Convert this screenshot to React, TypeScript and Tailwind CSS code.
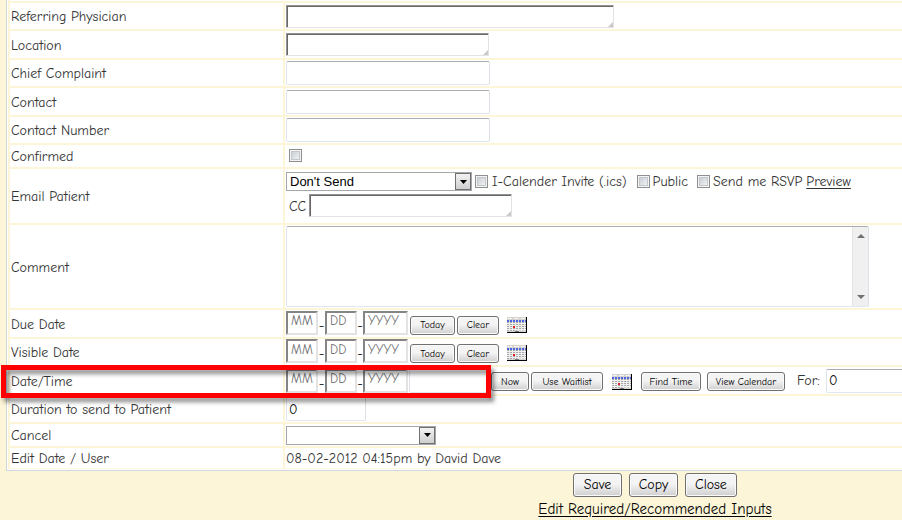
import type { ReactNode } from "react";

const hand = "font-['Comic_Sans_MS','Comic_Neue','Open_Sans',sans-serif]";
const arial = "font-['Liberation_Sans',Arial,sans-serif]";

function Row({ label, htmlFor, height, overlay, children }: {
  label: string; htmlFor?: string; height: string; overlay?: ReactNode; children: ReactNode;
}) {
  return (
    <div className={`relative grid grid-cols-[273px_minmax(0,1fr)] gap-0.5 ${height}`}>
      <div className="flex items-center bg-white px-px pt-0.5">
        {htmlFor ? <label htmlFor={htmlFor}>{label}</label> : <span>{label}</span>}
      </div>
      <div className="flex min-w-0 flex-col justify-center overflow-hidden bg-white pl-px">{children}</div>
      {overlay}
    </div>
  );
}

function InsetArea({ id, width, label }: { id: string; width: string; label?: string }) {
  return (
    <div className={`relative h-[23px] ${width}`}>
      <textarea id={id} aria-label={label} className="block h-full w-full resize-none overflow-hidden border border-t-[#949292] border-r-[#e3e3e3] border-b-[#e3e3e3] border-l-[#949292] bg-white px-1 shadow-[inset_1px_1px_0_#696767] outline-none" />
      <svg className="absolute right-px bottom-px" width="5" height="5" viewBox="0 0 5 5" aria-hidden="true"><path d="M5 0V5H0Z" fill="#c9c9c9" /></svg>
    </div>
  );
}

const softBorder = "rounded-xs border border-t-[#abadb3] border-r-[#dbdfe6] border-b-[#e2e6ee] border-l-[#dfe3ea] bg-white outline-none";

function TextBox({ id }: { id: string }) {
  return <input id={id} type="text" className={`h-6 w-[204px] px-1 ${softBorder}`} />;
}

function Check({ id, label }: { id: string; label?: string }) {
  return (
    <input id={id} aria-label={label} type="checkbox" className="size-[13px] shrink-0 appearance-none border border-[#8e8f8f] bg-linear-to-br from-[#bfc6cf] to-[#fbfbfb] shadow-[inset_0_0_0_1px_#f4f4f4,inset_0_0_0_2px_#c3c6cb]" />
  );
}

function Drop({ id, width, option, label }: { id: string; width: string; option: string; label?: string }) {
  return (
    <div className={`relative h-[19px] ${width}`}>
      <select id={id} aria-label={label} className={`block h-full w-full appearance-none border border-[#a5a7ad] bg-white px-[3px] text-[13px] leading-4 text-black outline-none ${arial}`}>
        <option>{option}</option>
      </select>
      <span className="pointer-events-none absolute inset-y-px right-px flex w-4 items-center justify-center border border-[#707070] bg-linear-to-b from-[#f2f2f2] to-[#cfcfcf]">
        <svg width="7" height="4" viewBox="0 0 7 4" aria-hidden="true"><path d="M0 0H7L3.500 4Z" fill="#000" /></svg>
      </span>
    </div>
  );
}

function Button({ width, children }: { width: string; children: ReactNode }) {
  return (
    <button type="button" className={`h-[19px] shrink-0 rounded-[3px] border border-[#707070] bg-linear-to-b from-[#f4f4f4] from-45% to-[#cfcfcf] text-[10px] leading-4 font-medium whitespace-nowrap text-black shadow-[inset_0_0_0_1px_#fafafa] ${width}`}>
      {children}
    </button>
  );
}

function FooterButton({ width, children }: { width: string; children: ReactNode }) {
  return (
    <button type="button" className={`h-6 rounded-[3px] border border-[#707070] bg-linear-to-b from-[#f4f4f4] from-45% to-[#cfcfcf] text-[14px] leading-5 text-black shadow-[inset_0_0_0_1px_#fafafa] ${width}`}>
      {children}
    </button>
  );
}

function CalendarButton() {
  return (
    <button type="button" aria-label="Open calendar" className="h-4 w-5 shrink-0">
      <svg className="block" width="20" height="16" viewBox="0 0 20 16" shapeRendering="crispEdges" aria-hidden="true">
        <rect width="20" height="16" fill="#d6d3ce" />
        <path d="M1 1h4v1H1zM7 1h5v1H7zM14 1h4v1h-4z" fill="#f4f4f4" />
        <path d="M0 5h19v1H0zM0 7h19v1H0zM0 9h19v1H0zM0 11h19v1H0zM0 13h10v1H0z" fill="#a8a8a8" />
        <path d="M0 6h19v1H0zM0 8h19v1H0zM0 10h19v1H0zM0 12h19v1H0z" fill="#f2f2f2" />
        <path d="M2 5h1v9H2zM5 5h1v9H5zM8 5h1v9H8zM11 5h1v9h-1zM14 5h1v9h-1zM17 5h1v9h-1z" fill="#eeeeee" />
        <path d="M0 3h2v2H0zM3 3h2v2H3zM6 3h2v2H6zM9 3h2v2H9zM12 3h2v2h-2zM15 3h2v2h-2zM18 3h1v2h-1z" fill="#4a66e4" />
        <rect x="6" y="9" width="2" height="2" fill="#e02020" />
        <path d="M19 0h1v16h-1zM0 15h20v1H0z" fill="#000" />
        <path d="M8 14h4v1H8z" fill="#777" />
      </svg>
    </button>
  );
}

function DatePart({ id, text, width, label }: { id: string; text: string; width: string; label: string }) {
  return (
    <input id={id} aria-label={label} type="text" placeholder={text} className={`h-6 shrink-0 border-2 border-t-[#858585] border-r-[#e3e3e3] border-b-[#e3e3e3] border-l-[#858585] bg-white px-[3px] pb-1 text-[13px] leading-4 outline-none placeholder:text-[#707070] ${width}`} />
  );
}

function DateParts({ id }: { id: string }) {
  return (
    <>
      <DatePart id={id} text="MM" width="w-8" label="Month" />
      <span className="w-[7px] text-center">-</span>
      <DatePart id={`${id}-day`} text="DD" width="w-8" label="Day" />
      <span className="w-[6px] text-center">-</span>
      <DatePart id={`${id}-year`} text="YYYY" width="w-[45px]" label="Year" />
    </>
  );
}

function DateRow({ id, label, height }: { id: string; label: string; height: string }) {
  return (
    <Row label={label} htmlFor={id} height={height}>
      <div className="flex items-end pb-0.5">
        <DateParts id={id} />
        <div className="ml-0.5 flex items-end gap-0.5">
          <Button width="w-[45px]">Today</Button>
          <Button width="w-[42px]">Clear</Button>
        </div>
        <div className="ml-2 flex pb-0.5"><CalendarButton /></div>
      </div>
    </Row>
  );
}

const highlight = (
  <div className="pointer-events-none absolute -top-0.5 -left-[9px] z-10 h-[33px] w-[490px] border-5 border-[#fe0000] drop-shadow-[3px_4px_2px_rgba(0,0,0,0.45)]" />
);

export default function App() {
  return (
    <main className={`min-h-screen overflow-hidden bg-[#fcf5d8] text-[14px] leading-[18px] text-[#333] ${hand}`}>
      <form className="ml-1.5 border-b border-l border-[#ccd6e2]">
        <div className="flex flex-col gap-0.5 border-b border-l border-white pb-px pl-0.5">
          <div className="h-px bg-white" />
          <Row label="Referring Physician" htmlFor="physician" height="min-h-[26px]"><InsetArea id="physician" width="w-[328px]" /></Row>
          <Row label="Location" htmlFor="location" height="min-h-[27px]"><InsetArea id="location" width="w-[203px]" /></Row>
          <Row label="Chief Complaint" htmlFor="complaint" height="min-h-[26px]"><TextBox id="complaint" /></Row>
          <Row label="Contact" htmlFor="contact" height="min-h-[27px]"><TextBox id="contact" /></Row>
          <Row label="Contact Number" htmlFor="number" height="min-h-[26px]"><TextBox id="number" /></Row>
          <Row label="Confirmed" htmlFor="confirmed" height="min-h-[22px]">
            <div className="flex pb-px pl-[3px]"><Check id="confirmed" /></div>
          </Row>
          <Row label="Email Patient" htmlFor="email" height="min-h-[54px]">
            <div className="flex flex-col gap-[3px] pb-[3px]">
              <div className="flex items-center whitespace-nowrap">
                <Drop id="email" width="w-[186px]" option="Don't Send" />
                <div className="ml-[3px] flex items-center gap-1"><Check id="ics" /><label htmlFor="ics">I-Calender Invite (.ics)</label></div>
                <div className="ml-2.5 flex items-center gap-[3px]"><Check id="public" /><label htmlFor="public">Public</label></div>
                <div className="ml-[9px] flex items-center gap-[3px]"><Check id="rsvp" /><label htmlFor="rsvp">Send me RSVP</label></div>
                <a href="#preview" className="ml-1 underline underline-offset-2">Preview</a>
              </div>
              <div className="flex items-center pl-[3px]">
                <label htmlFor="cc" className="w-5 pt-0.5">CC</label>
                <InsetArea id="cc" width="w-[203px]" />
              </div>
            </div>
          </Row>
          <Row label="Comment" htmlFor="comment" height="min-h-[83px]">
            <div className="relative h-[81px] w-[583px]">
              <textarea id="comment" className={`block h-full w-full resize-none py-1 pr-5 pl-1 ${softBorder}`} />
              <div className="absolute inset-y-px right-px flex w-4 flex-col items-center justify-between border-l border-[#e3e3e3] bg-[#f0f0f0] py-[7px]">
                <svg width="8" height="4" viewBox="0 0 8 4" aria-hidden="true"><path d="M0 4H8L4 0Z" fill="#707070" /></svg>
                <svg width="8" height="4" viewBox="0 0 8 4" aria-hidden="true"><path d="M0 0H8L4 4Z" fill="#707070" /></svg>
              </div>
            </div>
          </Row>
          <DateRow id="due" label="Due Date" height="min-h-[27px]" />
          <DateRow id="visible" label="Visible Date" height="min-h-[26px]" />
          <Row label="Date/Time" htmlFor="appointment" height="min-h-[27px]" overlay={highlight}>
            <div className="flex items-center">
              <div className="flex items-end"><DateParts id="appointment" /></div>
              <input type="text" aria-label="Time" className={`ml-px h-6 w-[82px] shrink-0 px-1 ${softBorder}`} />
              <div className="flex items-center gap-0.5 pt-0.5">
                <Button width="w-[38px]">Now</Button>
                <Button width="w-[72px]">Use Waitlist</Button>
              </div>
              <div className="mx-[9px] flex pt-0.5"><CalendarButton /></div>
              <div className="flex items-center gap-1.5 pt-0.5">
                <Button width="w-[60px]">Find Time</Button>
                <Button width="w-[78px]">View Calendar</Button>
              </div>
              <label htmlFor="for" className="ml-3 w-[29px] shrink-0">For:</label>
              <input id="for" type="text" defaultValue="0" className="h-6 min-w-10 flex-1 rounded-l-xs border border-r-0 border-t-[#abadb3] border-b-[#e2e6ee] border-l-[#dfe3ea] bg-white px-0.5 text-black outline-none" />
            </div>
          </Row>
          <Row label="Duration to send to Patient" htmlFor="duration" height="min-h-[26px]">
            <input id="duration" type="text" defaultValue="0" className={`h-6 w-20 px-0.5 text-black ${softBorder}`} />
          </Row>
          <Row label="Cancel" htmlFor="cancel" height="min-h-[22px]"><Drop id="cancel" width="w-[150px]" option="" /></Row>
          <Row label="Edit Date / User" height="min-h-[20px]"><span className="pt-0.5">08-02-2012 04:15pm by David Dave</span></Row>
        </div>
      </form>
      <footer className="flex flex-col items-center pt-0.5 pl-[408px]">
        <div className="flex gap-[7px]">
          <FooterButton width="w-[49px]">Save</FooterButton>
          <FooterButton width="w-[49px]">Copy</FooterButton>
          <FooterButton width="w-[52px]">Close</FooterButton>
        </div>
        <a href="#inputs" className="mt-0.5 text-[15px] leading-5 text-black underline underline-offset-2">Edit Required/Recommended Inputs</a>
      </footer>
    </main>
  );
}
